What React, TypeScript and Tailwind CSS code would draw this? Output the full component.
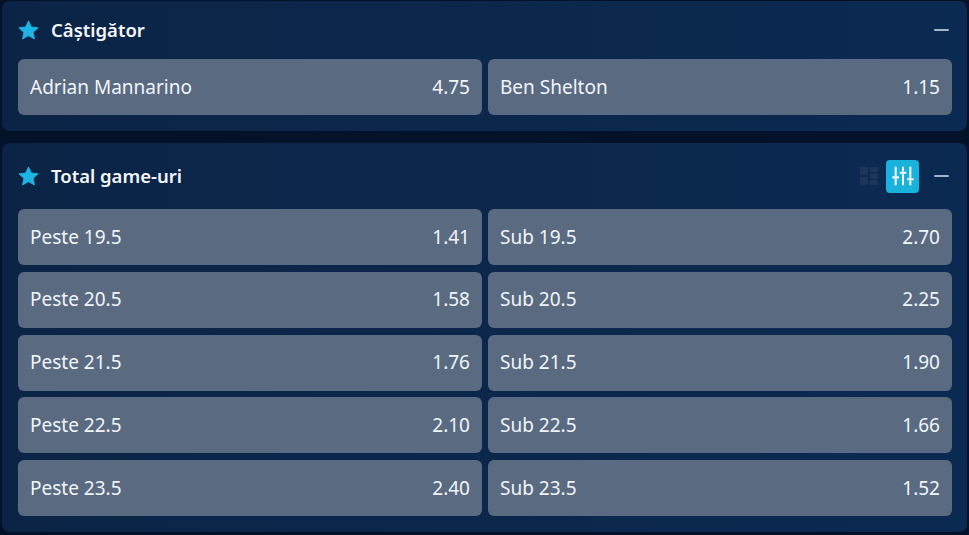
import React from "react";

type Odd = { label: string; price: string };

const winner: [Odd, Odd] = [
  { label: "Adrian Mannarino", price: "4.75" },
  { label: "Ben Shelton", price: "1.15" },
];

const totals: [Odd, Odd][] = [
  [{ label: "Peste 19.5", price: "1.41" }, { label: "Sub 19.5", price: "2.70" }],
  [{ label: "Peste 20.5", price: "1.58" }, { label: "Sub 20.5", price: "2.25" }],
  [{ label: "Peste 21.5", price: "1.76" }, { label: "Sub 21.5", price: "1.90" }],
  [{ label: "Peste 22.5", price: "2.10" }, { label: "Sub 22.5", price: "1.66" }],
  [{ label: "Peste 23.5", price: "2.40" }, { label: "Sub 23.5", price: "1.52" }],
];

function Star() {
  return (
    <svg width="21" height="21" viewBox="0 0 24 24" className="shrink-0">
      <path
        d="M12 1l3.3 7 7.7.9-5.7 5.2 1.5 7.6L12 17.9l-6.8 3.8 1.5-7.6L1 8.9 8.7 8z"
        fill="#1eb5e4"
        stroke="#1eb5e4"
        strokeLinejoin="round"
        strokeWidth="1"
      />
    </svg>
  );
}

function Minus() {
  return <div className="w-[15px] h-[2px] bg-[#a4b6cc] rounded-sm" />;
}

function GridIcon() {
  return (
    <svg width="20" height="20" viewBox="0 0 20 20" className="shrink-0">
      <rect x="1" y="1" width="8" height="8" rx="1" fill="#1c3657" />
      <rect x="1" y="11" width="8" height="8" rx="1" fill="#1c3657" />
      <rect x="11" y="1" width="8" height="5" rx="1" fill="#1c3657" />
      <rect x="11" y="7.5" width="8" height="5" rx="1" fill="#1c3657" />
      <rect x="11" y="14" width="8" height="5" rx="1" fill="#1c3657" />
    </svg>
  );
}

function SlidersIcon() {
  return (
    <svg width="22" height="22" viewBox="0 0 24 24" fill="none" stroke="#ffffff" strokeWidth="2.2" strokeLinecap="square">
      <path d="M4 3v8M4 16v5M12 3v3M12 11v10M20 3v10M20 18v3" />
      <path d="M1.5 13.5h5M9.5 8.5h5M17.5 15.5h5" />
    </svg>
  );
}

function OddButton({ odd }: { odd: Odd }) {
  return (
    <button className="h-14 flex items-center justify-between px-3 rounded-md bg-[#596a81] text-[#f1f5f9] text-[19px] leading-none">
      <span>{odd.label}</span>
      <span>{odd.price}</span>
    </button>
  );
}

function MarketHeader({ title, tall, children }: { title: string; tall?: boolean; children?: React.ReactNode }) {
  return (
    <div className={`flex items-center justify-between pr-[3px] ${tall ? "h-[66px]" : "h-[58px]"}`}>
      <div className="flex items-center gap-[12px]">
        <Star />
        <span className="text-[18.5px] font-semibold text-[#f4f7fb]">{title}</span>
      </div>
      <div className="flex items-center">
        {children}
        <Minus />
      </div>
    </div>
  );
}

export default function App() {
  return (
    <div
      className="w-[969px] h-[535px] bg-[#041229] flex flex-col gap-[12px] pt-px px-[2px] overflow-hidden"
      style={{ fontFamily: '"Noto Sans", "Open Sans", sans-serif' }}
    >
      <section className="rounded-lg bg-gradient-to-r from-[#0b2446] to-[#0b2a52] pl-4 pr-[15px] pb-4">
        <MarketHeader title="Câștigător" />
        <div className="grid grid-cols-2 gap-[6px]">
          {winner.map((o) => (
            <OddButton key={o.label} odd={o} />
          ))}
        </div>
      </section>

      <section className="rounded-lg bg-gradient-to-r from-[#0b2446] to-[#0b2a52] pl-4 pr-[15px] pb-4">
        <MarketHeader title="Total game-uri" tall>
          <GridIcon />
          <div className="ml-[7px] mr-[15px] w-[33px] h-[33px] rounded bg-[#18b2dd] flex items-center justify-center">
            <SlidersIcon />
          </div>
        </MarketHeader>
        <div className="flex flex-col gap-[6.75px]">
          {totals.map((row) => (
            <div key={row[0].label} className="grid grid-cols-2 gap-[6px]">
              <OddButton odd={row[0]} />
              <OddButton odd={row[1]} />
            </div>
          ))}
        </div>
      </section>
    </div>
  );
}
